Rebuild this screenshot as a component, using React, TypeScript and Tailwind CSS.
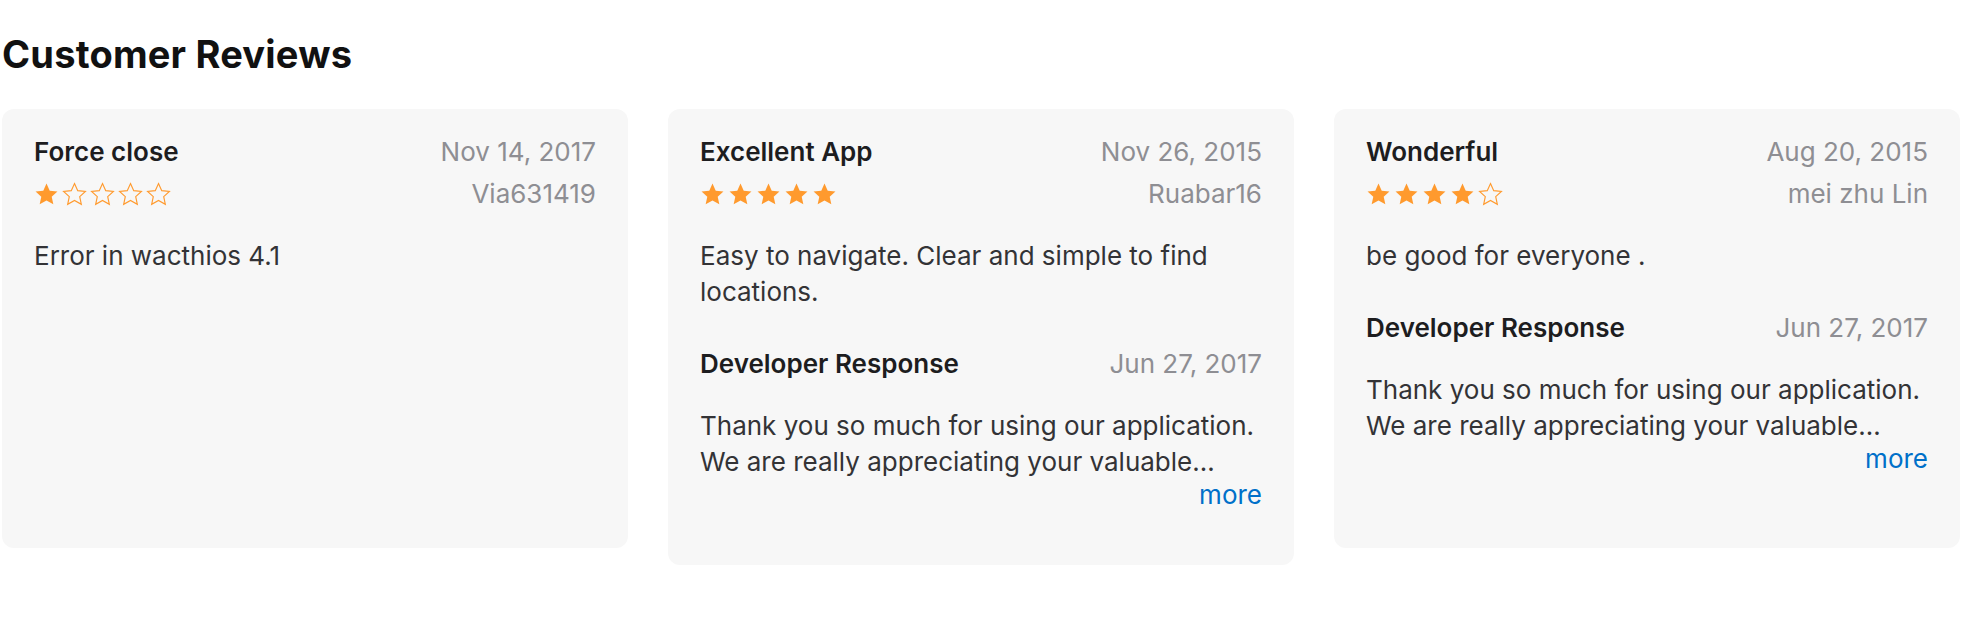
import React from "react";

type Review = {
  title: string;
  date: string;
  rating: number;
  author: string;
  body: string[];
  response?: { date: string; lines: string[] };
};

const reviews: Review[] = [
  {
    title: "Force close",
    date: "Nov 14, 2017",
    rating: 1,
    author: "Via631419",
    body: ["Error in wacthios 4.1"],
  },
  {
    title: "Excellent App",
    date: "Nov 26, 2015",
    rating: 5,
    author: "Ruabar16",
    body: ["Easy to navigate. Clear and simple to find", "locations."],
    response: {
      date: "Jun 27, 2017",
      lines: ["Thank you so much for using our application.", "We are really appreciating your valuable…"],
    },
  },
  {
    title: "Wonderful",
    date: "Aug 20, 2015",
    rating: 4,
    author: "mei zhu Lin",
    body: ["be good for everyone ."],
    response: {
      date: "Jun 27, 2017",
      lines: ["Thank you so much for using our application.", "We are really appreciating your valuable…"],
    },
  },
];

const Star = ({ filled }: { filled: boolean }) => (
  <svg width="25" height="25" viewBox="0 0 24 24" className="block">
    <path
      d="M12 1.5l3.1 6.8 7.4.8-5.5 5 1.55 7.3L12 17.7l-6.55 3.7L7 14.1l-5.5-5 7.4-.8z"
      fill={filled ? "#ff9a2e" : "none"}
      stroke="#ff9a2e"
      strokeWidth={filled ? 0 : 1.1}
    />
  </svg>
);

const Stars = ({ rating }: { rating: number }) => (
  <div className="flex items-center gap-[3px]">
    {[1, 2, 3, 4, 5].map((i) => (
      <Star key={i} filled={i <= rating} />
    ))}
  </div>
);

const ReviewCard = ({ review }: { review: Review }) => (
  <div className="min-h-[439px] rounded-xl bg-[#f7f7f7] px-8 pt-[26px] pb-[55px]">
    <div className="flex items-center justify-between leading-[34px]">
      <h3 className="font-semibold text-[#1d1d1f]">{review.title}</h3>
      <span className="text-[#8e8e93]">{review.date}</span>
    </div>
    <div className="mt-[8px] flex items-center justify-between leading-[34px]">
      <Stars rating={review.rating} />
      <span className="text-[#8e8e93]">{review.author}</span>
    </div>
    <p className="mt-[27px] leading-[36px] text-[#333336]">
      {review.body.map((line, i) => (
        <React.Fragment key={i}>
          {i > 0 && <br />}
          {line}
        </React.Fragment>
      ))}
    </p>
    {review.response && (
      <>
        <div className="mt-[37px] flex items-center justify-between leading-[34px]">
          <h4 className="font-semibold text-[#1d1d1f]">Developer Response</h4>
          <span className="text-[#8e8e93]">{review.response.date}</span>
        </div>
        <p className="mt-[27px] leading-[36px] text-[#333336]">
          {review.response.lines[0]}
          <br />
          {review.response.lines[1]}
        </p>
        <div className="flex justify-end leading-[30px]">
          <a className="text-[#0070c9]">more</a>
        </div>
      </>
    )}
  </div>
);

export default function App() {
  return (
    <div className="min-h-screen bg-white font-['Inter',sans-serif]">
      <div className="ml-[2px] w-[1958px]">
        <h2 className="pt-[30px] text-[38px] font-bold leading-[48px] tracking-[0.2px] text-[#111111]">
          Customer Reviews
        </h2>
        <div className="mt-[31px] grid grid-cols-3 items-start gap-10 text-[26px]">
          {reviews.map((r) => (
            <ReviewCard key={r.title} review={r} />
          ))}
        </div>
      </div>
    </div>
  );
}
